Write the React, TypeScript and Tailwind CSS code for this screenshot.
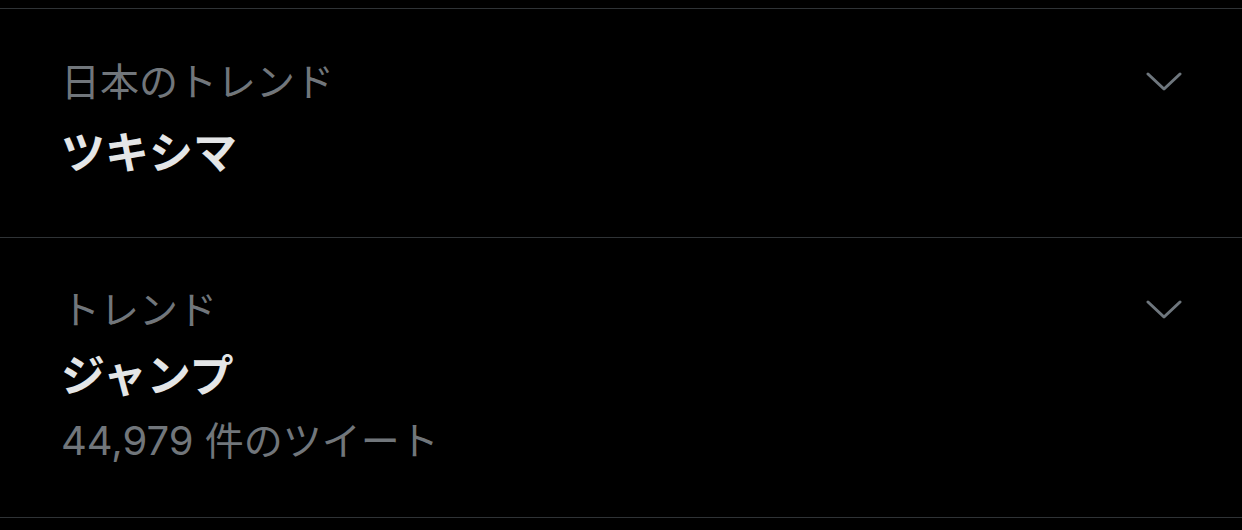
import React from "react";

const font = { fontFamily: '"Inter", "Noto Sans CJK JP", sans-serif' };

const Chevron: React.FC = () => (
  <svg width="36" height="20" viewBox="0 0 36 20" fill="none" className="shrink-0">
    <path d="M2 2 L18 17 L34 2" stroke="#6e767d" strokeWidth="3" strokeLinecap="round" strokeLinejoin="round" />
  </svg>
);

type Trend = {
  label: string;
  title: string;
  count?: string;
};

const TrendRow: React.FC<{ trend: Trend; first?: boolean }> = ({ trend, first }) => (
  <div
    className={
      first
        ? "flex justify-between border-b border-[#2f3336] pl-[61px] pr-[60px] pt-[49px] pb-[56px]"
        : "flex justify-between border-b border-[#2f3336] pl-[61px] pr-[60px] pt-[48px] pb-[52px]"
    }
  >
    <div className="flex flex-col">
      <p className="text-[39px] leading-[48px] text-[#71767b]">{trend.label}</p>
      <p
        className={
          first
            ? "mt-[19px] text-[44px] leading-[56px] font-bold text-[#e4e6e7]"
            : "mt-[14px] text-[44px] leading-[56px] font-bold text-[#e4e6e7]"
        }
      >
        {trend.title}
      </p>
      {trend.count && (
        <p className="mt-[13px] text-[39px] leading-[48px] text-[#71767b]">
          <span className="text-[40px]">44,979</span> 件のツイート
        </p>
      )}
    </div>
    <div className="pt-[14px]">
      <Chevron />
    </div>
  </div>
);

export default function App() {
  return (
    <div className="h-[530px] w-[1242px] overflow-hidden bg-black" style={font}>
      <div className="h-[9px] border-b border-[#2f3336]" />
      <TrendRow first trend={{ label: "日本のトレンド", title: "ツキシマ" }} />
      <TrendRow trend={{ label: "トレンド", title: "ジャンプ", count: "44,979 件のツイート" }} />
    </div>
  );
}
